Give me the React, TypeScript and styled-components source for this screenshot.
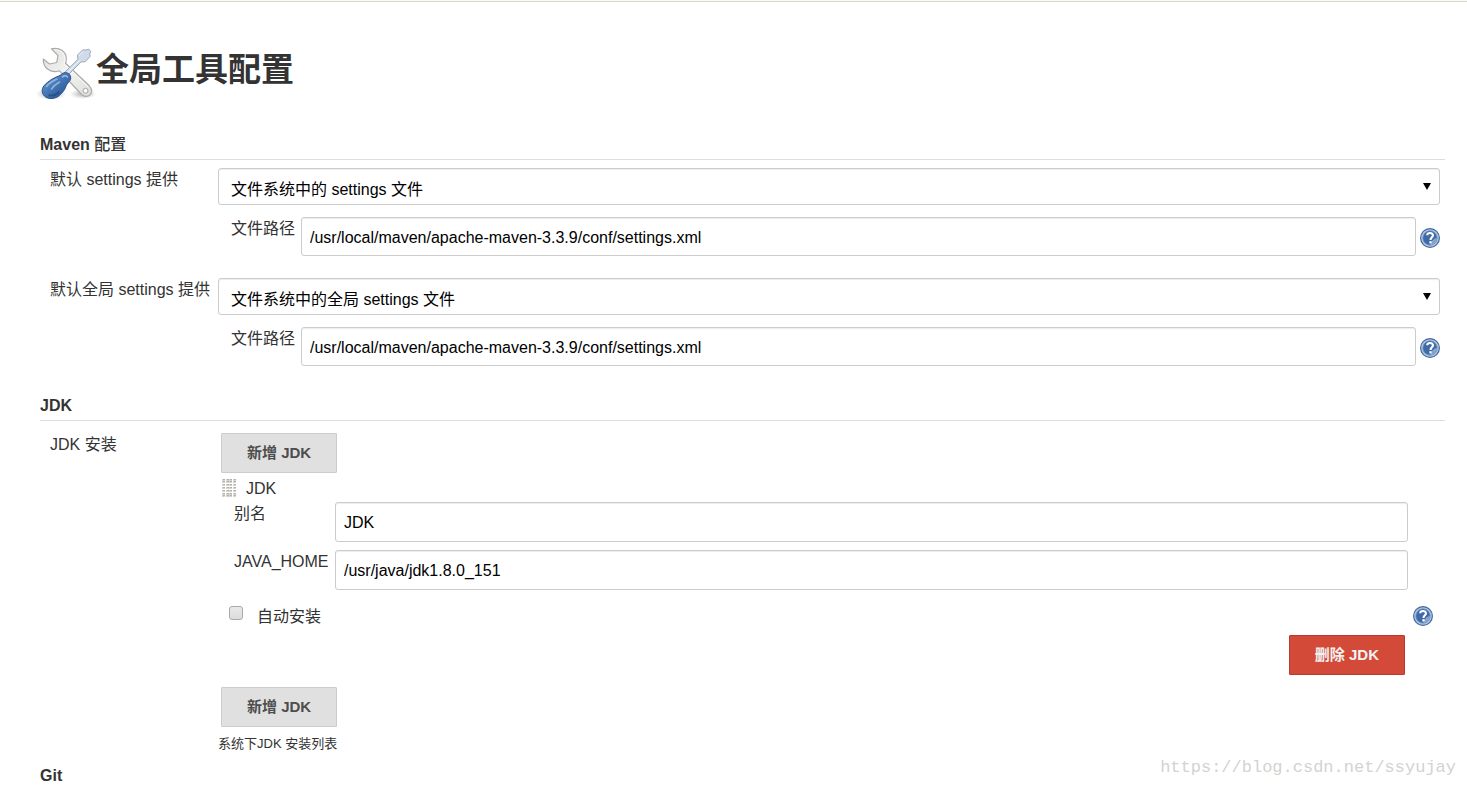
import React, { useId, useState } from "react";
import styled, { createGlobalStyle } from "styled-components";

const GlobalStyle = createGlobalStyle`
  *, *::before, *::after { box-sizing: border-box; }
  body {
    margin: 0;
    background: #fff;
    color: #333;
    font-family: "Liberation Sans", "Noto Sans CJK SC", sans-serif;
    font-size: 16px;
    line-height: 20px;
  }
  button, input, select { font: inherit; margin: 0; }
`;

const Page = styled.main`
  position: relative;
  border-top: 1px solid #fbfaf3;
  padding: 0 22px 0 40px;

  &::before {
    content: "";
    display: block;
    height: 1px;
    margin: 0 -22px 0 -40px;
    background: #d3d7cf;
  }
`;

const Title = styled.h1`
  display: flex;
  margin: 38px 0 0;
  color: #333;
  font-size: 33px;
  line-height: 60px;
  font-weight: 700;

  svg {
    flex: none;
    margin: 4px 0 0 -4px;
  }
`;

const SectionHeading = styled.h2<{ $last?: boolean }>`
  margin: 0;
  padding-bottom: 4px;
  border-bottom: ${(p) => (p.$last ? "0" : "1px solid #ddd")};
  font-size: 16px;
  line-height: 20px;
  font-weight: 700;
`;

const HeadingCjk = styled.span`
  font-weight: 500;
`;

const Section = styled.section<{ $top: number }>`
  margin-top: ${(p) => p.$top}px;
`;

const Row = styled.div<{ $top: number; $labelTop: number }>`
  display: grid;
  grid-template-columns: 168px minmax(0, 1fr);
  padding: ${(p) => p.$top}px 5px 0 10px;

  > :first-child {
    padding-top: ${(p) => p.$labelTop}px;
    white-space: nowrap;
  }
`;

const SelectWrap = styled.div`
  position: relative;

  svg {
    position: absolute;
    right: 9px;
    top: 15px;
    pointer-events: none;
  }
`;

const Select = styled.select`
  appearance: none;
  display: block;
  width: 100%;
  height: 37px;
  padding: 6px 28px 0 12px;
  border: 1px solid #ccc;
  border-radius: 3px;
  background: #fff;
  box-shadow: inset 0 1px 1px rgba(0, 0, 0, 0.075);
  color: #000;
`;

const TextInput = styled.input<{ $h: number }>`
  display: block;
  width: 100%;
  min-width: 0;
  height: ${(p) => p.$h}px;
  padding: 2px 8px 0;
  border: 1px solid #ccc;
  border-radius: 3px;
  background: #fff;
  box-shadow: inset 0 1px 1px rgba(0, 0, 0, 0.075);
  color: #000;
`;

const PathRow = styled.div`
  display: grid;
  grid-template-columns: 70px minmax(0, 1fr) 20px;
  align-items: center;
  padding: 12px 0 0 13px;

  label {
    align-self: start;
    padding-top: 2px;
  }
  button {
    margin-top: 2px;
  }
  input {
    width: calc(100% - 4px);
  }
`;

const HelpButton = styled.button`
  display: block;
  flex: none;
  width: 20px;
  height: 20px;
  padding: 0;
  border: 0;
  background: none;
  cursor: pointer;

  svg { display: block; }
`;

const Button = styled.button<{ $danger?: boolean }>`
  display: block;
  height: 40px;
  padding: 0 25px;
  border: 1px solid ${(p) => (p.$danger ? "#b93a2d" : "#ccc")};
  border-radius: 1px;
  background: ${(p) => (p.$danger ? "#d34a39" : "#e0e0e0")};
  color: ${(p) => (p.$danger ? "#f2f2f2" : "#4d4d4d")};
  font-size: 15px;
  font-weight: 700;
  white-space: nowrap;
  cursor: pointer;
`;

const AddButton = styled(Button)`
  margin-left: 3px;
`;

const ChunkHeader = styled.div`
  display: flex;
  align-items: center;
  gap: 10px;
  padding: 5px 0 4px 4px;

  span { padding-top: 2px; line-height: 18px; }
`;

const Fields = styled.div`
  display: grid;
  grid-template-columns: 101px minmax(0, 1fr);
  row-gap: 8px;
  padding: 0 32px 0 16px;
`;

const FieldLabel = styled.label`
  padding-top: 2px;
`;

const CheckRow = styled.div`
  display: flex;
  padding: 16px 7px 0 11px;

  label {
    flex: 1;
    margin-left: 14px;
    padding-top: 1px;
    line-height: 19px;
  }
`;

const Checkbox = styled.input`
  appearance: none;
  flex: none;
  width: 14px;
  height: 14px;
  border: 1px solid #a9a9a9;
  border-radius: 3px;
  background: linear-gradient(#e9e9e9, #dcdcdc);

  &:checked { background: #4a77b0; }
`;

const DeleteRow = styled.div`
  display: flex;
  justify-content: flex-end;
  padding: 9px 35px 12px 0;
`;

const Description = styled.p`
  margin: 7px 0 0;
  font-size: 13px;
  line-height: 20px;
`;

const Watermark = styled.div`
  position: absolute;
  right: 11px;
  bottom: 12px;
  color: #d3d3cf;
  font-family: "Liberation Mono", monospace;
  font-size: 17px;
  line-height: 20px;
  pointer-events: none;
`;

function ToolsIcon() {
  return (
    <svg width="60" height="60" viewBox="0 0 60 60" aria-hidden="true">
      <defs>
        <radialGradient id="shadow">
          <stop offset="0" stopColor="#000" stopOpacity=".3" />
          <stop offset="1" stopColor="#000" stopOpacity="0" />
        </radialGradient>
        <linearGradient id="steel" x1="0" y1="0" x2="1" y2="1">
          <stop offset="0" stopColor="#dededc" />
          <stop offset=".5" stopColor="#f3f3f2" />
          <stop offset="1" stopColor="#dcdcda" />
        </linearGradient>
        <linearGradient id="handle" x1="0" y1="0" x2="1" y2="1">
          <stop offset="0" stopColor="#7ba5da" />
          <stop offset=".45" stopColor="#4778b7" />
          <stop offset="1" stopColor="#204a87" />
        </linearGradient>
      </defs>
      <ellipse cx="15" cy="50" rx="15" ry="6" fill="url(#shadow)" />
      <ellipse cx="47" cy="50" rx="13" ry="5" fill="url(#shadow)" />
      <path
        d="M15.500 4.800C23 2.800 30.500 7.500 30.300 15c0 1.600-.3 3-.8 4.300L53.300 41.800c3 3 3.200 6.800.8 9-2.200 2.200-6 2.200-8.500-.3L23.500 26.800c-7.800 3-16.800-2.300-16.200-11.800l6.200 5 7.200-1.500 1.300-6.800z"
        fill="url(#steel)" stroke="#aaaaa8" strokeWidth="1.200" strokeLinejoin="round"
      />
      <path d="M18.500 5.700c6 0 10.600 4 10.500 9.500 0 1.800-.4 3-1 4.600L52.300 43" fill="none" stroke="#fff" strokeOpacity=".8" />
      <circle cx="49.500" cy="46.800" r="2.500" fill="#f8f8f7" stroke="#a5a5a3" />
      <path
        d="M27 30 42 15.300l-.6-4.300L47 5.800l2.800.2 3.200-.8 1.700 2.300-1 2.500.6 2.200-5 5.500-4.400.3L30 33z"
        fill="#cfdaea" stroke="#9cabbd" strokeWidth="1" strokeLinejoin="round"
      />
      <path d="M29.500 30.500 43.500 16.500M43 11.500l4.500-4.300" fill="none" stroke="#f2f6fb" strokeWidth="1" />
      <path
        d="M25.500 30.300c2.300-2.300 5.600-2.200 7.600-.2 2.200 2.200 2.200 5.300.1 7.500-1.600 1.700-2.700 3.200-3.600 5.700-1.200 3.400-3.300 5.200-5.900 7.900-4 4-11.500 4.400-15.100 1-3.600-3.700-3.200-8.200.9-12.100 2.700-2.500 5.500-4.500 9.300-6.400 2.300-1.200 5.100-1.800 6.700-3.400z"
        fill="url(#handle)" stroke="#2a528c" strokeWidth="1"
      />
      <path d="M26.500 33c2-2 4-1.300 5 0" fill="none" stroke="#9dbde6" strokeWidth="1.500" strokeLinecap="round" />
      <path d="M10.500 42.500c3-4 6-5.500 10.500-7.500M15.500 45c2.500-3.500 4.500-5 8-7" fill="none" stroke="#8fb2df" strokeWidth="1.600" strokeLinecap="round" />
      <path d="M12.500 51c4 1.500 8.500-.2 10.500-3.500" fill="none" stroke="#163a70" strokeOpacity=".5" strokeWidth="2" />
    </svg>
  );
}

function Help({ topic }: { topic: string }) {
  return (
    <HelpButton type="button" aria-label={`${topic} 帮助`}>
      <svg width="20" height="20" viewBox="0 0 20 20" aria-hidden="true">
        <circle cx="10" cy="10" r="9.400" fill="#b4c8e3" stroke="#44699f" strokeWidth="1.200" />
        <circle cx="10" cy="10" r="7.200" fill="#3f6aa8" stroke="#6f92c2" strokeWidth=".8" />
        <path d="M10 17.200a7.200 7.200 0 0 0 7.200-7.200c-3 0-6 3-7.200 7.200z" fill="#86a4ce" />
        <path d="M7.200 7.200c.1-2.900 5.800-3.100 5.800.1 0 2-2.500 2.100-2.500 4.600" fill="none" stroke="#fff" strokeWidth="2.100" />
        <rect x="9.400" y="13.200" width="2.200" height="2.200" fill="#fff" />
      </svg>
    </HelpButton>
  );
}

const gripRows = [0, 3, 6, 9, 12, 15, 18];
const gripColumns = [0, 4, 8, 12];

function Grip() {
  return (
    <svg width="14" height="20" viewBox="0 0 15 20" shapeRendering="crispEdges" aria-hidden="true">
      {gripRows.map((y) =>
        gripColumns.map((x) => (
          <g key={`${x}-${y}`}>
            <rect x={x} y={y} width="3" height="2" fill="#d6d5d0" />
            <rect x={x + 1} y={y} width="2" height="1" fill="#b3b2aa" />
          </g>
        ))
      )}
    </svg>
  );
}

interface SettingsProps {
  label: string;
  option: string;
  top: number;
}

function SettingsProvider({ label, option, top }: SettingsProps) {
  const id = useId();
  return (
    <Row $top={top} $labelTop={2}>
      <label htmlFor={`${id}s`}>{label}</label>
      <div>
        <SelectWrap>
          <Select id={`${id}s`}>
            <option>{option}</option>
          </Select>
          <svg width="8" height="7" viewBox="0 0 8 7" aria-hidden="true">
            <path d="M0 0h8L4 7z" fill="#000" />
          </svg>
        </SelectWrap>
        <PathRow>
          <label htmlFor={`${id}p`}>文件路径</label>
          <TextInput id={`${id}p`} $h={39} defaultValue="/usr/local/maven/apache-maven-3.3.9/conf/settings.xml" />
          <Help topic={label} />
        </PathRow>
      </div>
    </Row>
  );
}

export default function App() {
  const [auto, setAuto] = useState(false);
  return (
    <>
      <GlobalStyle />
      <Page>
        <Title>
          <ToolsIcon />
          全局工具配置
        </Title>

        <Section $top={31}>
          <SectionHeading>
            Maven <HeadingCjk>配置</HeadingCjk>
          </SectionHeading>
          <SettingsProvider label="默认 settings 提供" option="文件系统中的 settings 文件" top={8} />
          <SettingsProvider label="默认全局 settings 提供" option="文件系统中的全局 settings 文件" top={22} />
        </Section>

        <Section $top={30}>
          <SectionHeading>JDK</SectionHeading>
          <Row $top={12} $labelTop={2}>
            <div>JDK 安装</div>
            <div>
              <AddButton type="button">新增 JDK</AddButton>
              <ChunkHeader>
                <Grip />
                <span>JDK</span>
              </ChunkHeader>
              <Fields>
                <FieldLabel htmlFor="jdk-name">别名</FieldLabel>
                <TextInput id="jdk-name" $h={40} defaultValue="JDK" />
                <FieldLabel htmlFor="java-home">JAVA_HOME</FieldLabel>
                <TextInput id="java-home" $h={40} defaultValue="/usr/java/jdk1.8.0_151" />
              </Fields>
              <CheckRow>
                <Checkbox id="auto" type="checkbox" checked={auto} onChange={(e) => setAuto(e.target.checked)} />
                <label htmlFor="auto">自动安装</label>
                <Help topic="自动安装" />
              </CheckRow>
              <DeleteRow>
                <Button type="button" $danger>删除 JDK</Button>
              </DeleteRow>
              <AddButton type="button">新增 JDK</AddButton>
              <Description>系统下JDK 安装列表</Description>
            </div>
          </Row>
        </Section>

        <Section $top={12}>
          <SectionHeading $last>Git</SectionHeading>
        </Section>
        <Watermark>https://blog.csdn.net/ssyujay</Watermark>
      </Page>
    </>
  );
}
